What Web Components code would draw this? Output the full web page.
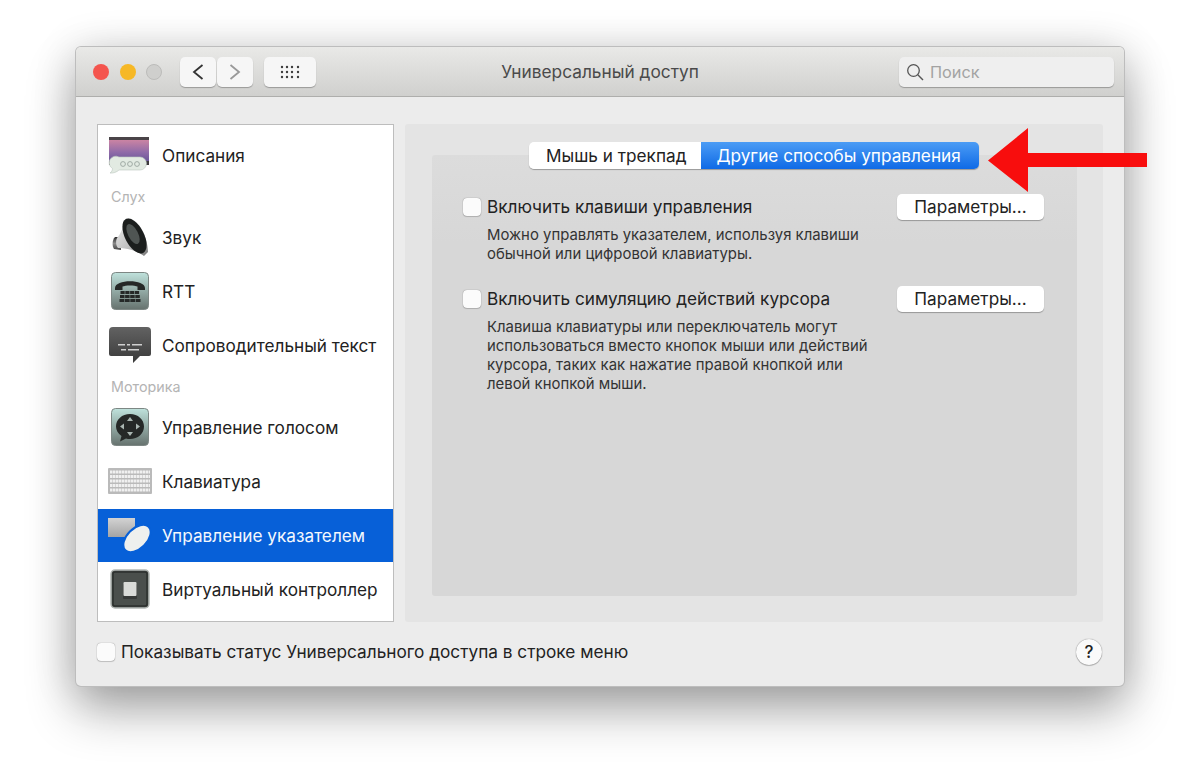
<!DOCTYPE html>
<html lang="ru">
<head>
<meta charset="utf-8">
<title>Универсальный доступ</title>
<style>
  html, body { margin: 0; height: 100%; background: #fff; }
  body { font-family: "Inter", "Liberation Sans", sans-serif; overflow: hidden; }
  .stage { width: 1200px; height: 780px; padding: 47px 0 0 76px; box-sizing: border-box; position: relative; }
</style>
</head>
<body>
<div class="stage">
  <prefs-window>
    <prefs-titlebar slot="titlebar" heading="Универсальный доступ"></prefs-titlebar>
    <prefs-sidebar slot="sidebar">
      <side-row label="Описания" icon="captions"></side-row>
      <side-heading>Слух</side-heading>
      <side-row label="Звук" icon="speaker"></side-row>
      <side-row label="RTT" icon="rtt"></side-row>
      <side-row label="Сопроводительный текст" icon="subtitle"></side-row>
      <side-heading>Моторика</side-heading>
      <side-row label="Управление голосом" icon="voice"></side-row>
      <side-row label="Клавиатура" icon="keyboard"></side-row>
      <side-row label="Управление указателем" icon="pointer" selected></side-row>
      <side-row label="Виртуальный контроллер" icon="switch"></side-row>
    </prefs-sidebar>
    <prefs-pane slot="pane">
      <option-block label="Включить клавиши управления">Можно управлять указателем, используя клавиши<br>обычной или цифровой клавиатуры.</option-block>
      <option-block label="Включить симуляцию действий курсора">Клавиша клавиатуры или переключатель могут<br>использоваться вместо кнопок мыши или действий<br>курсора, таких как нажатие правой кнопкой или<br>левой кнопкой мыши.</option-block>
    </prefs-pane>
    <prefs-footer slot="footer"></prefs-footer>
  </prefs-window>
  <red-arrow></red-arrow>
</div>

<script>
const ICONS = {
  captions: `<svg width="44" height="40" viewBox="0 0 44 40">
    <defs><linearGradient id="c" x1="0" y1="0" x2="0" y2="1"><stop offset="0" stop-color="#d98aa2"/><stop offset=".55" stop-color="#8f6aa8"/><stop offset="1" stop-color="#5a4e92"/></linearGradient></defs>
    <rect x="1" y="2" width="40" height="28" fill="url(#c)"/>
    <rect x="1" y="2" width="40" height="3" fill="#4a4448"/>
    <rect x="1" y="26" width="40" height="4" fill="#3d3a3e"/>
    <path d="M11 22h21a6.500 6.500 0 0 1 0 13H11c-2 2-6 3.500-9 3 1.500-1 2.500-2.500 2.500-4.500A6.500 6.500 0 0 1 11 22z" fill="#e2eae2" stroke="#bcc7bf" stroke-width=".6"/>
    <g fill="none" stroke="#98a49e" stroke-width=".9"><circle cx="15" cy="29" r="2.400"/><circle cx="22" cy="29" r="2.400"/><circle cx="29" cy="29" r="2.400"/></g>
  </svg>`,
  speaker: `<svg width="44" height="44" viewBox="0 0 44 44">
    <defs><linearGradient id="s" x1="0" y1="0" x2="1" y2="1"><stop offset="0" stop-color="#ededed"/><stop offset=".6" stop-color="#bdbdbd"/><stop offset="1" stop-color="#787878"/></linearGradient>
    <linearGradient id="s2" x1="0" y1="0" x2="0" y2="1"><stop offset="0" stop-color="#2a2a2a"/><stop offset=".5" stop-color="#8a8a8a"/><stop offset="1" stop-color="#444"/></linearGradient></defs>
    <path d="M7 22h6v13l-7-1c-2-3-2-9 1-12z" fill="url(#s2)"/>
    <path d="M18 3C15 12 13 19 9 23c-1.500 3-1 8 1 10 8 0 18 2 26 8l4-4C40 22 30 2 18 3z" fill="url(#s)"/>
    <ellipse cx="26.500" cy="21" rx="9.500" ry="19" transform="rotate(-27 26.500 21)" fill="#1b1e1d"/>
    <ellipse cx="25" cy="19" rx="5" ry="11" transform="rotate(-27 25 19)" fill="#4f5553"/>
  </svg>`,
  rtt: `<svg width="40" height="40" viewBox="0 0 40 40">
    <defs><linearGradient id="r" x1="0" y1="0" x2="0" y2="1"><stop offset="0" stop-color="#bfe2dc"/><stop offset="1" stop-color="#66726e"/></linearGradient></defs>
    <rect x="1.500" y="1.500" width="37" height="37" rx="4" fill="url(#r)" stroke="#7d8784"/>
    <path d="M5 17c0-9 30-9 30 0v2h-7.500v-3.500c-3-1.500-12-1.500-15 0V19H5z" fill="#252827"/>
    <g fill="#252827">
      <rect x="10.500" y="20" width="4.200" height="3"/><rect x="15.300" y="20" width="4.200" height="3"/><rect x="20.100" y="20" width="4.200" height="3"/><rect x="24.900" y="20" width="4.200" height="3"/>
      <rect x="10" y="24" width="4.500" height="3"/><rect x="15.100" y="24" width="4.500" height="3"/><rect x="20.200" y="24" width="4.500" height="3"/><rect x="25.300" y="24" width="4.500" height="3"/>
      <rect x="9.500" y="28" width="4.800" height="3"/><rect x="14.900" y="28" width="4.800" height="3"/><rect x="20.300" y="28" width="4.800" height="3"/><rect x="25.700" y="28" width="4.800" height="3"/>
    </g>
  </svg>`,
  subtitle: `<svg width="42" height="36" viewBox="0 0 42 36">
    <defs><linearGradient id="b" x1="0" y1="0" x2="0" y2="1"><stop offset="0" stop-color="#626262"/><stop offset="1" stop-color="#3a3a3a"/></linearGradient></defs>
    <path d="M4 0h34a4 4 0 0 1 4 4v23a2 2 0 0 1-2 2H31l-7 7 0-7H2a2 2 0 0 1-2-2V4a4 4 0 0 1 4-4z" fill="url(#b)"/>
    <g fill="#d0d0d0"><rect x="9" y="17" width="7" height="1.500"/><rect x="18" y="17" width="3" height="1.500"/><rect x="23" y="17" width="10" height="1.500"/><rect x="12" y="22" width="5" height="1.500"/><rect x="19" y="22" width="11" height="1.500"/></g>
  </svg>`,
  voice: `<svg width="40" height="40" viewBox="0 0 40 40">
    <defs><linearGradient id="v" x1="0" y1="0" x2="0" y2="1"><stop offset="0" stop-color="#bfe2dc"/><stop offset="1" stop-color="#66726e"/></linearGradient></defs>
    <rect x="1.500" y="1.500" width="37" height="37" rx="4" fill="url(#v)" stroke="#7d8784"/>
    <path d="M20 7c8 0 14 5.500 14 12.500S28 32 20 32c-1 0-3 0-4-.500l-6 3 1.500-5.500C8 26.500 6 23 6 19.500 6 12.500 12 7 20 7z" fill="#252827"/>
    <g fill="#aab6b2"><path d="M20 10l3 4h-6z"/><path d="M20 29l3-4h-6z"/><path d="M10 19.500l4-3v6z"/><path d="M30 19.500l-4-3v6z"/></g>
  </svg>`,
  keyboard: `<svg width="44" height="26" viewBox="0 0 44 26">
    <rect x="0" y="0" width="44" height="26" rx="1" fill="#bababa"/>
    <g stroke="#f0f0f0" stroke-width="3" stroke-dasharray="2.500 .5"><path d="M2 4h40M2 8.500h40M2 13h40M2 17.500h40M2 22h40"/></g>
  </svg>`,
  pointer: `<svg width="44" height="36" viewBox="0 0 44 36">
    <defs><linearGradient id="p" x1="0" y1="0" x2="0" y2="1"><stop offset="0" stop-color="#d3d3d3"/><stop offset="1" stop-color="#a4a4a4"/></linearGradient></defs>
    <rect x="0" y="1" width="27" height="19" fill="url(#p)"/>
    <ellipse cx="29" cy="21.500" rx="16.500" ry="10" transform="rotate(-45 29 21.500)" fill="#eef0ee" stroke="#0760d8" stroke-width="2"/>
  </svg>`,
  switch: `<svg width="40" height="40" viewBox="0 0 40 40">
    <rect x="1" y="1" width="38" height="38" rx="4" fill="#4a4f4c" stroke="#b3b8b5" stroke-width="1.500"/>
    <rect x="3" y="3" width="34" height="34" rx="2" fill="none" stroke="#2d302e" stroke-width="1.500"/>
    <rect x="13" y="15" width="14" height="15" rx="1" fill="#292c2a" opacity=".6"/>
    <rect x="13.500" y="13" width="13" height="14" rx="1" fill="#d9dbd8"/>
  </svg>`
};

// every component just sets its shadow html
function shadow(el, html) {
  el.attachShadow({ mode: 'open' }).innerHTML = html;
}

class PrefsWindow extends HTMLElement {
  connectedCallback() {
    shadow(this, `
      <style>
        :host {
          display: flex;
          flex-direction: column;
          width: 1048px;
          height: 639px;
          background: #ececec;
          border-radius: 5px;
          box-shadow: 0 0 0 1px #bdbdbd, 0 24px 50px rgba(0,0,0,.32), 0 4px 44px rgba(0,0,0,.16);
          overflow: hidden;
        }
        .body { display: flex; padding: 27px 21px 0; }
        .columns { height: 498px; display: flex; gap: 11px; }
      </style>
      <slot name="titlebar"></slot>
      <div class="body"><div class="columns"><slot name="sidebar"></slot><slot name="pane"></slot></div></div>
      <slot name="footer"></slot>
    `);
  }
}

class PrefsTitlebar extends HTMLElement {
  connectedCallback() {
    shadow(this, `
      <style>
        :host {
          display: flex;
          align-items: center;
          height: 50px;
          box-sizing: border-box;
          padding: 0 10px 0 17px;
          background: linear-gradient(#e9e9e7, #d0d0ce);
          border-bottom: 1px solid #aeaeac;
          position: relative;
        }
        .light { width: 16px; height: 16px; border-radius: 50%; margin-right: 10.500px; box-sizing: border-box; }
        .red { background: #f4554e; }
        .yellow { background: #f6b826; }
        .grey { background: #cfcfcd; border: 1px solid #bcbcba; }
        .btn {
          height: 30px;
          background: #f6f6f6;
          border-radius: 5px;
          box-shadow: 0 1px 1px rgba(0,0,0,.28);
          display: flex;
          align-items: center;
          justify-content: center;
        }
        .nav { display: flex; gap: 1px; margin-left: 7px; }
        .nav .btn { width: 36px; }
        .apps { width: 52px; margin-left: 11px; }
        .title {
          position: absolute; left: 0; right: 0; top: 15px;
          text-align: center;
          font-size: 17.300px;
          color: #4a4a4a;
          line-height: 20px;
        }
        .search {
          margin-left: auto;
          width: 215px;
          height: 30px;
          background: #efefef;
          border-radius: 5px;
          box-shadow: 0 1px 1px rgba(0,0,0,.28);
          display: flex;
          align-items: center;
          gap: 6px;
          padding-left: 7px;
          box-sizing: border-box;
          color: #a3a3a3;
          font-size: 16.300px;
        }
      </style>
      <span class="light red"></span><span class="light yellow"></span><span class="light grey"></span>
      <div class="nav">
        <div class="btn"><svg width="14" height="20" viewBox="0 0 14 20"><path d="M11.500 3L3 10l8.500 7" fill="none" stroke="#333" stroke-width="1.800"/></svg></div>
        <div class="btn"><svg width="14" height="20" viewBox="0 0 14 20"><path d="M2.500 3L11 10l-8.500 7" fill="none" stroke="#999" stroke-width="1.800"/></svg></div>
      </div>
      <div class="btn apps"><svg width="20" height="14" viewBox="0 0 20 14" fill="#3c3c3c"><circle cx="2" cy="2" r="1.200"/><circle cx="7" cy="2" r="1.200"/><circle cx="12" cy="2" r="1.200"/><circle cx="18" cy="2" r="1.200"/><circle cx="2" cy="7" r="1.200"/><circle cx="7" cy="7" r="1.200"/><circle cx="12" cy="7" r="1.200"/><circle cx="18" cy="7" r="1.200"/><circle cx="2" cy="12" r="1.200"/><circle cx="7" cy="12" r="1.200"/><circle cx="12" cy="12" r="1.200"/><circle cx="18" cy="12" r="1.200"/></svg></div>
      <div class="title">${this.getAttribute('heading')}</div>
      <div class="search">
        <svg width="18" height="18" viewBox="0 0 18 18"><circle cx="7.500" cy="7.500" r="5.800" fill="none" stroke="#555" stroke-width="1.300"/><path d="M11.800 11.800L17 17" stroke="#555" stroke-width="1.400"/></svg>
        <span>Поиск</span>
      </div>
    `);
  }
}

class PrefsSidebar extends HTMLElement {
  connectedCallback() {
    shadow(this, `
      <style>
        :host {
          display: block;
          width: 297px;
          height: 498px;
          box-sizing: border-box;
          background: #fff;
          border: 1px solid #bdbdbd;
          padding-top: 3px;
          color: #222;
        }
      </style>
      <slot></slot>
    `);
  }
}

class SideRow extends HTMLElement {
  connectedCallback() {
    const sel = this.hasAttribute('selected');
    shadow(this, `
      <style>
        :host {
          display: flex;
          align-items: center;
          height: 54px;
          background: ${sel ? 'linear-gradient(#0760d8, #0760d8) no-repeat bottom / 100% 53px' : 'transparent'};
          color: ${sel ? '#f4f8fd' : '#222'};
          font-size: 17.200px;
        }
        .ico { width: 64px; flex: none; display: flex; justify-content: center; }
      </style>
      <div class="ico">${ICONS[this.getAttribute('icon')]}</div>
      <span>${this.getAttribute('label')}</span>
    `);
  }
}

class SideHeading extends HTMLElement {
  connectedCallback() {
    shadow(this, `
      <style>
        :host { display: block; height: 28px; line-height: 30px; padding-left: 13px; font-size: 14.300px; color: #b4b4b4; }
      </style>
      <slot></slot>
    `);
  }
}

class PrefsPane extends HTMLElement {
  connectedCallback() {
    shadow(this, `
      <style>
        :host {
          display: block;
          width: 698px;
          height: 498px;
          box-sizing: border-box;
          background: #e4e4e4;
          border-radius: 3px;
          padding: 31px 26px 26px 27px;
          position: relative;
        }
        .inner {
          height: 100%;
          box-sizing: border-box;
          background: linear-gradient(#dcdcdc, #d7d7d7 20%);
          border-radius: 3px;
          padding: 39px 33px 0 31px;
          display: flex;
          flex-direction: column;
          gap: 22px;
        }
        .tabs {
          position: absolute;
          left: 124px;
          top: 18px;
          display: flex;
          height: 27px;
          font-size: 17.200px;
          line-height: 27px;
          border-radius: 5px;
          box-shadow: 0 1px 1px rgba(0,0,0,.3);
          overflow: hidden;
        }
        .tab { padding: 0 15px 0 17px; background: #fff; color: #222; }
        .tab.on { padding: 0 18px 0 15px; background: linear-gradient(#4b9cf5, #0f6ae6); color: #fff; }
      </style>
      <div class="tabs"><div class="tab">Мышь и трекпад</div><div class="tab on">Другие способы управления</div></div>
      <div class="inner"><slot></slot></div>
    `);
  }
}

class OptionBlock extends HTMLElement {
  connectedCallback() {
    shadow(this, `
      <style>
        :host { display: grid; grid-template-columns: 24px 1fr auto; color: #222; }
        .box { width: 18px; height: 18px; background: #fbfbfb; border-radius: 4px; box-shadow: 0 0 1px rgba(0,0,0,.5), 0 1px 1px rgba(0,0,0,.15); align-self: center; }
        .label { font-size: 17.200px; line-height: 26px; }
        .btn {
          width: 147px;
          height: 26px;
          background: #fff;
          border-radius: 5px;
          box-shadow: 0 1px 1px rgba(0,0,0,.3);
          text-align: center;
          line-height: 26px;
          font-size: 17.200px;
        }
        .desc { grid-column: 2 / 4; font-size: 14.900px; line-height: 19px; margin-top: 6px; color: #333; }
      </style>
      <div class="box"></div>
      <div class="label">${this.getAttribute('label')}</div>
      <div class="btn">Параметры...</div>
      <div class="desc"><slot></slot></div>
    `);
  }
}

class PrefsFooter extends HTMLElement {
  connectedCallback() {
    shadow(this, `
      <style>
        :host {
          display: flex;
          align-items: center;
          flex: 1;
          padding: 0 22px 5px 21px;
          font-size: 17.230px;
          color: #222;
        }
        .box { width: 18px; height: 18px; background: #fbfbfb; border-radius: 4px; box-shadow: 0 0 1px rgba(0,0,0,.5), 0 1px 1px rgba(0,0,0,.15); margin-right: 6px; }
        .help {
          margin-left: auto;
          width: 26px; height: 26px;
          border-radius: 50%;
          background: #fafafa;
          box-shadow: 0 0 1px rgba(0,0,0,.6), 0 1px 1px rgba(0,0,0,.2);
          text-align: center;
          line-height: 26px;
          font-size: 17px;
          font-weight: 500;
        }
      </style>
      <div class="box"></div>
      <span>Показывать статус Универсального доступа в строке меню</span>
      <div class="help">?</div>
    `);
  }
}

class RedArrow extends HTMLElement {
  connectedCallback() {
    shadow(this, `
      <style>
        :host { position: absolute; left: 988px; top: 128px; width: 160px; height: 64px; }
        svg { display: block; }
      </style>
      <svg width="160" height="64" viewBox="0 0 160 64"><path d="M0 32.500L40 0v25h119v14H40v25z" fill="#f80d0d"/></svg>
    `);
  }
}

customElements.define('prefs-window', PrefsWindow);
customElements.define('prefs-titlebar', PrefsTitlebar);
customElements.define('prefs-sidebar', PrefsSidebar);
customElements.define('side-row', SideRow);
customElements.define('side-heading', SideHeading);
customElements.define('prefs-pane', PrefsPane);
customElements.define('option-block', OptionBlock);
customElements.define('prefs-footer', PrefsFooter);
customElements.define('red-arrow', RedArrow);
</script>
</body>
</html>
